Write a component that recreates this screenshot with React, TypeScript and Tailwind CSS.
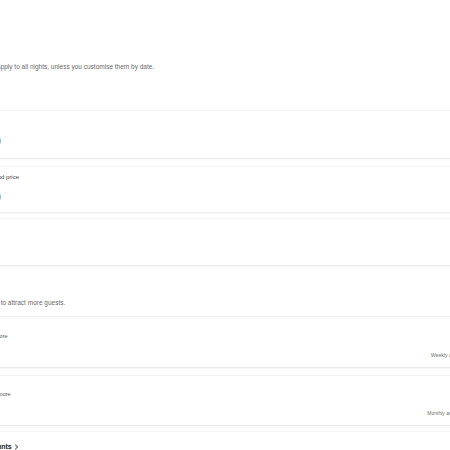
export default function App() {
  const card =
    'rounded-[6px] bg-white shadow-[0_0_0_1px_rgba(0,0,0,0.035),0_1px_3px_rgba(0,0,0,0.07)] px-[16px]'

  return (
    <div className="w-[450px] h-[450px] overflow-hidden bg-white font-['Liberation_Sans',Arial,sans-serif] text-[#222222]">
      <div className="w-[560px] -ml-[58px] flex flex-col pt-[63px]">
        {/* Nightly price */}
        <p className="px-[16px] text-[6.5px] leading-[8px] text-[#6a6a6a] whitespace-nowrap">
          These prices apply to all nights, unless you customise them by date.
        </p>

        <div className={`${card} mt-[40px] h-[47px] pt-[6px]`}>
          <p className="text-[6px] leading-[8px] text-[#444444] whitespace-nowrap">Base price</p>
          <p className="mt-[9px] text-[14px] leading-[14px] font-bold whitespace-nowrap">£1,250</p>
        </div>

        <div className={`${card} mt-[9px] h-[45px] pt-[6px]`}>
          <p className="text-[6px] leading-[8px] text-[#444444] whitespace-nowrap">Custom weekend price</p>
          <p className="mt-[9px] text-[14px] leading-[14px] font-bold whitespace-nowrap">£1,400</p>
        </div>

        <div className={`${card} mt-[7px] h-[46px] pt-[6px]`}>
          <p className="text-[6px] leading-[8px] text-[#444444] whitespace-nowrap">Tips</p>
        </div>

        {/* Discounts */}
        <p className="mt-[34px] px-[16px] text-[6.5px] leading-[8px] text-[#6a6a6a] whitespace-nowrap">
          Add discounts to attract more guests.
        </p>

        <div className={`${card} mt-[10px] h-[50px] pt-[7px]`}>
          <p className="text-[6px] leading-[8px] font-bold whitespace-nowrap">Weekly</p>
          <p className="text-[5.5px] leading-[8px] text-[#555555] whitespace-nowrap">For 7 nights or more</p>
          <div className="mt-[11px] flex items-end justify-between">
            <span className="text-[6px] leading-[8px] font-bold">10%</span>
            <span className="text-[5.2px] leading-[8px] text-[#717171] whitespace-nowrap">Weekly average is £315</span>
          </div>
        </div>

        <div className={`${card} mt-[9px] h-[49px] pt-[6px]`}>
          <p className="text-[6px] leading-[8px] font-bold whitespace-nowrap">Monthly</p>
          <p className="text-[5.5px] leading-[8px] text-[#555555] whitespace-nowrap">For 28 nights or more</p>
          <div className="mt-[11px] flex items-end justify-between">
            <span className="text-[6px] leading-[8px] font-bold">20%</span>
            <span className="text-[5px] leading-[8px] text-[#717171] whitespace-nowrap">Monthly average is £1,200</span>
          </div>
        </div>

        <div className={`${card} mt-[7px] h-[40px] pt-[11px]`}>
          <p className="flex items-center gap-[2px] text-[7px] leading-[8px] font-bold whitespace-nowrap">
            Other discounts
            <svg width="5" height="6" viewBox="0 0 5 6" fill="none">
              <path d="M1.2 0.8 L3.6 3 L1.2 5.2" stroke="#222222" strokeWidth="1" />
            </svg>
          </p>
        </div>
      </div>
    </div>
  )
}
